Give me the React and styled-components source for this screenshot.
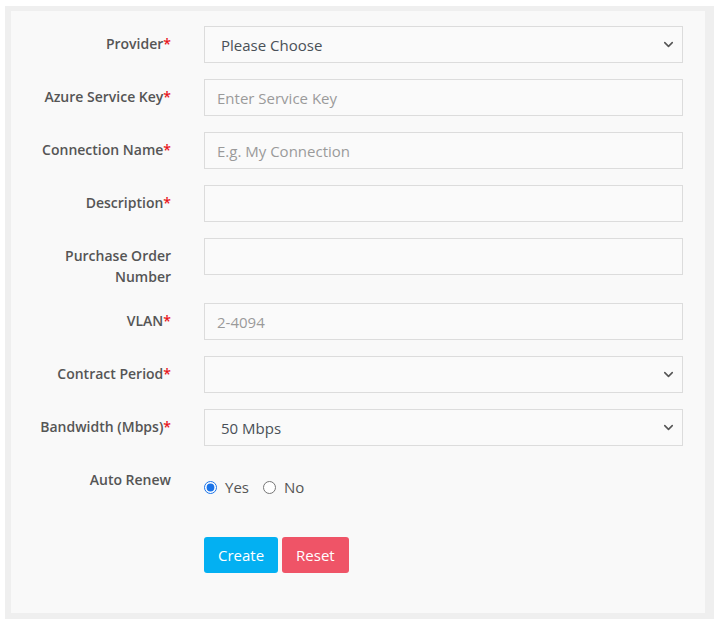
import React, { useState } from "react";
import styled, { createGlobalStyle } from "styled-components";
import { ChevronDown } from "lucide-react";

const GlobalStyle = createGlobalStyle`
  html, body {
    margin: 0;
    padding: 0;
    background: #fff;
    font-family: "Open Sans", "Noto Sans", sans-serif;
  }
`;

const Frame = styled.div`
  margin: 6px 0 0 5px;
  width: 709px;
  height: 613px;
  box-sizing: border-box;
  padding: 5px 9px 6px 6px;
  background: #efefef;
`;

const Panel = styled.div`
  height: 100%;
  box-sizing: border-box;
  background: #f9f9f9;
  padding: 15px 22px 0 0;
`;

const Form = styled.form`
  display: grid;
  grid-template-columns: 160px 1fr;
  column-gap: 33px;
  row-gap: 16px;
`;

const Label = styled.label`
  text-align: right;
  font-size: 14px;
  font-weight: 600;
  line-height: 21px;
  color: #555;
  padding-top: 7px;
`;

const Req = styled.span`
  color: #e8141c;
`;

const Input = styled.input`
  box-sizing: border-box;
  width: 100%;
  height: 37px;
  border: 1px solid #dcdcdc;
  background: #fafafa;
  padding: 0 12px;
  font-family: inherit;
  font-size: 15px;
  color: #495057;
  outline: none;
  &::placeholder {
    color: #9a9a9a;
  }
`;

const SelectWrap = styled.div`
  position: relative;
  svg {
    position: absolute;
    right: 7px;
    top: 11px;
    color: #555;
    pointer-events: none;
  }
`;

const Select = styled.select`
  appearance: none;
  box-sizing: border-box;
  width: 100%;
  height: 37px;
  border: 1px solid #dcdcdc;
  border-radius: 0;
  background: #fafafa;
  padding: 0 16px;
  font-family: inherit;
  font-size: 15px;
  color: #495057;
  outline: none;
`;

const Radios = styled.div`
  display: flex;
  align-items: center;
  padding-top: 15px;
  height: 20px;
`;

const RadioOpt = styled.label`
  display: flex;
  align-items: center;
  font-size: 15px;
  color: #555;
  margin-right: 14px;
  input {
    margin: 0 8px 0 0;
    width: 13px;
    height: 13px;
    accent-color: #1a73e8;
  }
`;

const Buttons = styled.div`
  display: flex;
  gap: 4px;
  margin-top: 24px;
`;

const Button = styled.button`
  height: 36px;
  border: none;
  border-radius: 3px;
  padding: 0 14px;
  font-family: inherit;
  font-size: 15px;
  color: #fff;
  background: ${(p) => (p.$variant === "danger" ? "#ef5467" : "#03b0f2")};
  cursor: pointer;
`;

function Field({ label, required, children }) {
  return (
    <>
      <Label>
        {label}
        {required && <Req>*</Req>}
      </Label>
      <div>{children}</div>
    </>
  );
}

function Dropdown({ value, options }) {
  return (
    <SelectWrap>
      <Select defaultValue={value}>
        {options.map((o) => (
          <option key={o}>{o}</option>
        ))}
      </Select>
      <ChevronDown size={15} strokeWidth={2.5} />
    </SelectWrap>
  );
}

export default function App() {
  const [renew, setRenew] = useState("yes");

  return (
    <>
      <GlobalStyle />
      <Frame>
        <Panel>
          <Form onSubmit={(e) => e.preventDefault()}>
            <Field label="Provider" required>
              <Dropdown value="Please Choose" options={["Please Choose"]} />
            </Field>
            <Field label="Azure Service Key" required>
              <Input placeholder="Enter Service Key" />
            </Field>
            <Field label="Connection Name" required>
              <Input placeholder="E.g. My Connection" />
            </Field>
            <Field label="Description" required>
              <Input />
            </Field>
            <Field label={<>Purchase Order<br />Number</>}>
              <Input />
            </Field>
            <Field label="VLAN" required>
              <Input placeholder="2-4094" />
            </Field>
            <Field label="Contract Period" required>
              <Dropdown value="" options={[""]} />
            </Field>
            <Field label="Bandwidth (Mbps)" required>
              <Dropdown value="50 Mbps" options={["50 Mbps", "100 Mbps", "200 Mbps"]} />
            </Field>
            <Field label="Auto Renew">
              <Radios>
                <RadioOpt>
                  <input
                    type="radio"
                    name="renew"
                    checked={renew === "yes"}
                    onChange={() => setRenew("yes")}
                  />
                  Yes
                </RadioOpt>
                <RadioOpt>
                  <input
                    type="radio"
                    name="renew"
                    checked={renew === "no"}
                    onChange={() => setRenew("no")}
                  />
                  No
                </RadioOpt>
              </Radios>
            </Field>
            <div />
            <Buttons>
              <Button type="submit">Create</Button>
              <Button type="reset" $variant="danger">Reset</Button>
            </Buttons>
          </Form>
        </Panel>
      </Frame>
    </>
  );
}
